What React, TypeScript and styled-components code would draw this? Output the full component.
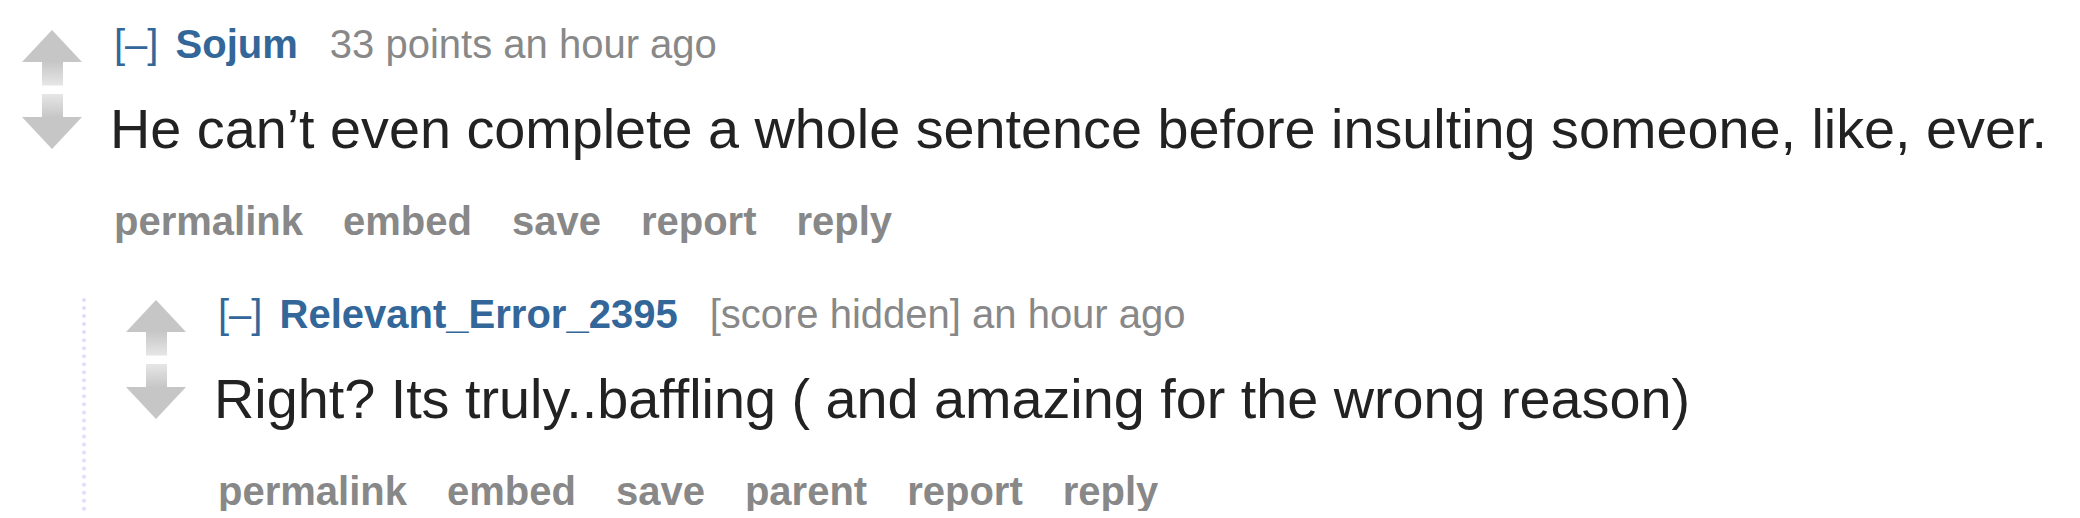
import React from "react";
import styled, { createGlobalStyle } from "styled-components";

const Global = createGlobalStyle`
  html, body {
    margin: 0;
    padding: 0;
    background: #ffffff;
  }
  body {
    font-family: "Liberation Sans", Arial, Helvetica, sans-serif;
  }
`;

const Thread = styled.div`
  padding-top: 28px;
  width: 2080px;
`;

const CommentBox = styled.div<{ $nested?: boolean }>`
  padding-left: ${(p) => (p.$nested ? "40px" : "22px")};
`;

const Row = styled.div`
  display: flex;
  align-items: flex-start;
`;

const Midcol = styled.div`
  width: 60px;
  padding-top: 2px;
  display: flex;
  flex-direction: column;
  gap: 8px;
  flex-shrink: 0;
`;

const Entry = styled.div`
  margin-left: 28px;
  flex: 1;
  min-width: 0;
`;

const Tagline = styled.div`
  padding-left: 4px;
  font-size: 40px;
  line-height: 32px;
  color: #888888;
  white-space: nowrap;
`;

const Expand = styled.a`
  color: #336699;
  text-decoration: none;
  margin-right: 6px;
`;

const Author = styled.a`
  color: #336699;
  font-weight: bold;
  text-decoration: none;
  margin-right: 32px;
`;

const Meta = styled.span`
  color: #888888;
`;

const Body = styled.p`
  margin: 37px 0 0 0;
  font-size: 55.75px;
  line-height: 64px;
  color: #222222;
  white-space: nowrap;
`;

const Buttons = styled.ul`
  list-style: none;
  margin: 40px 0 0 0;
  padding: 0 0 0 4px;
  display: flex;
  gap: 40px;
  font-size: 40px;
  line-height: 40px;
  font-weight: bold;
`;

const ButtonItem = styled.li`
  color: #888888;
`;

const Child = styled.div`
  margin-top: 57px;
  margin-left: 60px;
  border-left: 4px dotted #ddddff;
`;

const ArrowSvg = styled.svg`
  display: block;
  width: 60px;
  height: 56px;
`;

const UpArrow = () => (
  <ArrowSvg viewBox="0 0 60 56">
    <defs>
      <linearGradient id="upShaft" x1="0" y1="0" x2="0" y2="1">
        <stop offset="0" stopColor="#c6c6c6" />
        <stop offset="1" stopColor="#e6e6e6" />
      </linearGradient>
    </defs>
    <polygon points="0,32 30,0 60,32" fill="#c6c6c6" />
    <rect x="20" y="31.5" width="21" height="24" fill="url(#upShaft)" />
  </ArrowSvg>
);

const DownArrow = () => (
  <ArrowSvg viewBox="0 0 60 56">
    <defs>
      <linearGradient id="downShaft" x1="0" y1="0" x2="0" y2="1">
        <stop offset="0" stopColor="#e6e6e6" />
        <stop offset="1" stopColor="#c6c6c6" />
      </linearGradient>
    </defs>
    <rect x="20" y="0" width="21" height="23.5" fill="url(#downShaft)" />
    <polygon points="0,23 60,23 30,55" fill="#c6c6c6" />
  </ArrowSvg>
);

type CommentProps = {
  author: string;
  meta: string;
  text: string;
  buttons: string[];
  nested?: boolean;
  children?: React.ReactNode;
};

const Comment = ({ author, meta, text, buttons, nested, children }: CommentProps) => (
  <CommentBox $nested={nested}>
    <Row>
      <Midcol>
        <UpArrow />
        <DownArrow />
      </Midcol>
      <Entry>
        <Tagline>
          <Expand>[–]</Expand> <Author>{author}</Author>
          <Meta>{meta}</Meta>
        </Tagline>
        <Body>{text}</Body>
        <Buttons>
          {buttons.map((b) => (
            <ButtonItem key={b}>{b}</ButtonItem>
          ))}
        </Buttons>
      </Entry>
    </Row>
    {children}
  </CommentBox>
);

export default function App() {
  return (
    <>
      <Global />
      <Thread>
        <Comment
          author="Sojum"
          meta="33 points an hour ago"
          text="He can’t even complete a whole sentence before insulting someone, like, ever."
          buttons={["permalink", "embed", "save", "report", "reply"]}
        >
          <Child>
            <Comment
              nested
              author="Relevant_Error_2395"
              meta="[score hidden] an hour ago"
              text="Right? Its truly..baffling ( and amazing for the wrong reason)"
              buttons={["permalink", "embed", "save", "parent", "report", "reply"]}
            />
          </Child>
        </Comment>
      </Thread>
    </>
  );
}
